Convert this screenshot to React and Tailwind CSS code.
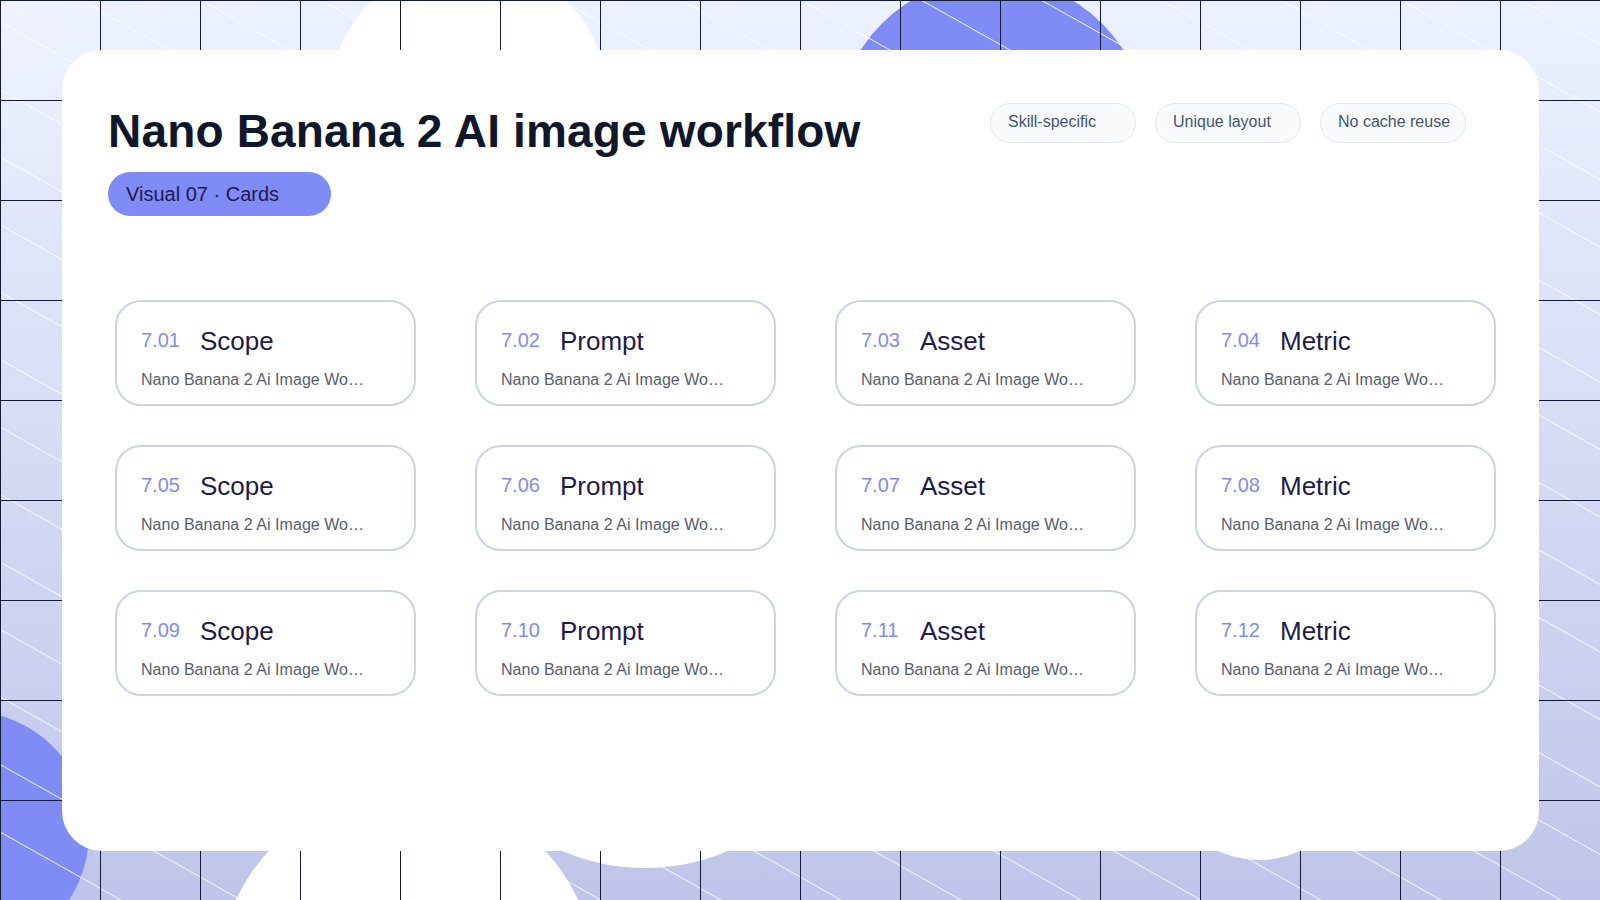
const rows = [
  ["7.01", "Scope"], ["7.02", "Prompt"], ["7.03", "Asset"], ["7.04", "Metric"],
  ["7.05", "Scope"], ["7.06", "Prompt"], ["7.07", "Asset"], ["7.08", "Metric"],
  ["7.09", "Scope"], ["7.10", "Prompt"], ["7.11", "Asset"], ["7.12", "Metric"],
];

function Backdrop() {
  const diagonals = [];
  for (let k = -14; k < 15; k++) {
    const x0 = 81 + 120 * k;
    diagonals.push(<line key={k} x1={x0} y1={0} x2={x0 + 1600} y2={900} stroke="#ffffff" strokeWidth="1" strokeOpacity="0.9" />);
  }
  const gridV = [];
  for (let x = 0; x <= 1600; x += 100) gridV.push(<rect key={x} x={x} y={0} width="1" height="900" fill="#111a38" />);
  const gridH = [];
  for (let y = 0; y <= 900; y += 100) gridH.push(<rect key={y} x={0} y={y} width="1600" height="1" fill="#111a38" />);
  return (
    <svg className="absolute inset-0 h-[900px] w-[1600px]" viewBox="0 0 1600 900">
      <circle cx="469" cy="100" r="139" fill="#ffffff" />
      <circle cx="992" cy="134" r="156" fill="#7f8cf6" />
      <circle cx="-33" cy="833" r="122" fill="#7f8cf6" />
      <circle cx="407" cy="980" r="189" fill="#ffffff" />
      <circle cx="645" cy="658" r="210" fill="#ffffff" />
      <circle cx="1259" cy="762" r="98" fill="#ffffff" />
      {diagonals}
      {gridV}
      {gridH}
    </svg>
  );
}

function Tag({ children }) {
  return (
    <div className="h-10 w-[146px] rounded-[20px] border border-slate-200 bg-slate-50 pl-[17px] pt-2 text-base leading-5 text-slate-600">
      {children}
    </div>
  );
}

function Card({ num, label }) {
  return (
    <div className="h-[106px] w-[301px] rounded-[26px] border-2 border-slate-300 pl-6 pt-[23px]">
      <div className="flex h-8 items-center gap-[20px]">
        <span className="mb-[2px] w-[39px] shrink-0 text-[20px] leading-7 text-[#7f8cf0]">{num}</span>
        <span className="text-[26px] leading-8 text-indigo-950">{label}</span>
      </div>
      <div className="mt-[11px] text-base leading-6 tracking-[0.04px] text-[#565f6e]">Nano Banana 2 Ai Image Wo…</div>
    </div>
  );
}

export default function App() {
  return (
    <div className="relative h-[900px] w-[1600px] overflow-hidden bg-[radial-gradient(circle_at_0_0,rgba(255,255,255,0.2),transparent_200px),linear-gradient(180deg,#ecf1ff,#e9effd_6%,#bfc5ea)] font-['Liberation_Sans',Arial,sans-serif]">
      <Backdrop />
      <div className="relative ml-[62px] mt-[50px] h-[801px] w-[1477px] rounded-[40px] bg-white">
        <div className="flex justify-between pl-[46px] pr-[73px] pt-[53px]">
          <div className="pt-[3px]">
            <h1 className="text-[46px] font-bold leading-[50px] tracking-[0.17px] text-slate-900">Nano Banana 2 AI image workflow</h1>
            <div className="mt-4 h-[44px] w-[223px] rounded-[22px] bg-[#7f8cf6] pl-[18px] text-[20px] leading-[44px] text-indigo-950">
              Visual 07 · Cards
            </div>
          </div>
          <div className="flex gap-[19px]">
            <Tag>Skill-specific</Tag>
            <Tag>Unique layout</Tag>
            <Tag>No cache reuse</Tag>
          </div>
        </div>
        <div className="mt-[84px] grid grid-cols-[repeat(4,301px)] gap-x-[59px] gap-y-[39px] pl-[53px]">
          {rows.map(([n, l]) => <Card key={n} num={n} label={l} />)}
        </div>
      </div>
    </div>
  );
}
